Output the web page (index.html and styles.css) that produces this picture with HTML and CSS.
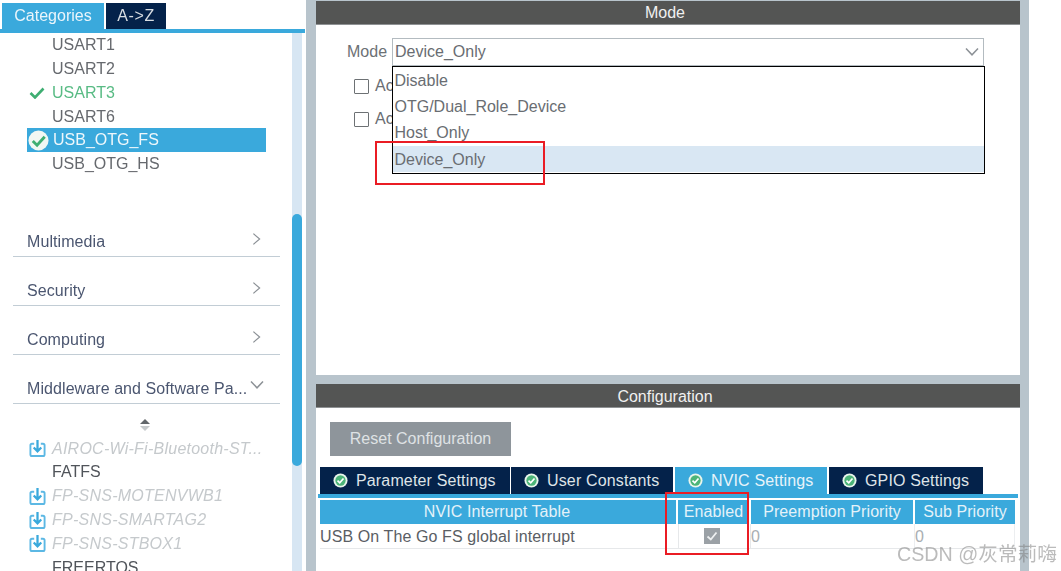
FILE: index.html
```html
<!DOCTYPE html>
<html lang="en">
<head>
<meta charset="utf-8">
<title>USB_OTG_FS Mode and Configuration</title>
<link rel="stylesheet" href="styles.css">
</head>
<body>
<svg class="defs" width="0" height="0" aria-hidden="true">
  <symbol id="dl" viewBox="0 0 18 20">
    <path d="M5.5 5.5H3.2Q1.5 5.5 1.5 7.2V16.8Q1.5 18.5 3.2 18.5H14.8Q16.500 18.500 16.500 16.800V7.200Q16.500 5.500 14.800 5.500H12.500" fill="none" stroke="#5cb8e4" stroke-width="2"/>
    <path d="M9 1.500V13M5 9.500L9 13.500L13 9.500" fill="none" stroke="#3aa9dc" stroke-width="2.400"/>
  </symbol>
  <symbol id="ok" viewBox="0 0 16 16">
    <circle cx="8" cy="8" r="7.500" fill="#e9f5ec"/>
    <circle cx="8" cy="8" r="5.500" fill="#4cb578"/>
    <path d="M4.800 8.200L7.200 10.500L11.200 5.900" fill="none" stroke="#fff" stroke-width="1.800"/>
  </symbol>
  <symbol id="chev" viewBox="0 0 10 14">
    <path d="M1.500 1L8.500 7L1.500 13" fill="none" stroke="#8c9196" stroke-width="1.300"/>
  </symbol>
  <symbol id="down" viewBox="0 0 14 10">
    <path d="M1 1.500L7 7.800L13 1.500" fill="none" stroke="#8c9196" stroke-width="1.500"/>
  </symbol>
</svg>
<div class="app">
  <aside class="side">
    <div class="side-tabs">
      <div class="side-tab side-tab-on">Categories</div>
      <div class="side-tab">A-&gt;Z</div>
    </div>
    <div class="side-rule"></div>
    <div class="side-body">
      <div class="side-list">
        <div class="item item-top"><span class="mark"></span>USART1</div>
        <div class="item item-top"><span class="mark"></span>USART2</div>
        <div class="item item-top item-green"><span class="mark"><svg class="tick" viewBox="0 0 16 12"><path d="M1.500 6L6 10.500L14.500 1.500" fill="none" stroke="#3fae72" stroke-width="2.600"/></svg></span>USART3</div>
        <div class="item item-top"><span class="mark"></span>USART6</div>
        <div class="item item-top item-on"><span class="mark"><svg class="tick-round" viewBox="0 0 22 22"><circle cx="11" cy="11" r="10.500" fill="#f1f7f3"/><path d="M5 11.500L9.500 16L17.500 7" fill="none" stroke="#3fae72" stroke-width="3"/></svg></span>USB_OTG_FS</div>
        <div class="item item-top"><span class="mark"></span>USB_OTG_HS</div>

        <div class="cats">
          <div class="cat"><span>Multimedia</span><svg class="chev"><use href="#chev"/></svg></div>
          <div class="cat"><span>Security</span><svg class="chev"><use href="#chev"/></svg></div>
          <div class="cat"><span>Computing</span><svg class="chev"><use href="#chev"/></svg></div>
          <div class="cat cat-open"><span>Middleware and Software Pa...</span><svg class="chev-down"><use href="#down"/></svg></div>
        </div>

        <div class="sort"><svg viewBox="0 0 12 14" width="12" height="14"><path d="M6 1L11 6H1Z" fill="#62676b"/><path d="M6 13L11 8H1Z" fill="#c6cacc"/></svg></div>

        <div class="item item-dim"><span class="mark"><svg class="dl"><use href="#dl"/></svg></span>AIROC-Wi-Fi-Bluetooth-ST...</div>
        <div class="item item-dark"><span class="mark"></span>FATFS</div>
        <div class="item item-dim"><span class="mark"><svg class="dl"><use href="#dl"/></svg></span>FP-SNS-MOTENVWB1</div>
        <div class="item item-dim"><span class="mark"><svg class="dl"><use href="#dl"/></svg></span>FP-SNS-SMARTAG2</div>
        <div class="item item-dim"><span class="mark"><svg class="dl"><use href="#dl"/></svg></span>FP-SNS-STBOX1</div>
        <div class="item item-dark"><span class="mark"></span>FREERTOS</div>
      </div>
      <div class="track"><div class="thumb"></div></div>
    </div>
  </aside>

  <main class="main">
    <section class="mode">
      <h2 class="bar">Mode</h2>
      <div class="mode-body">
        <div class="mode-row">
          <span class="mode-label">Mode</span>
          <div class="select">
            <span>Device_Only</span>
            <svg class="select-arrow"><use href="#down"/></svg>
          </div>
        </div>
        <div class="check-row"><span class="box"></span><span class="check-text">Ac</span></div>
        <div class="check-row"><span class="box"></span><span class="check-text">Ac</span></div>
        <div class="menu">
          <div class="opt">Disable</div>
          <div class="opt">OTG/Dual_Role_Device</div>
          <div class="opt">Host_Only</div>
          <div class="opt opt-on">Device_Only</div>
        </div>
      </div>
    </section>

    <section class="config">
      <h2 class="bar">Configuration</h2>
      <div class="reset">Reset Configuration</div>
      <div class="tabs">
        <div class="tab tab-a"><svg class="ok"><use href="#ok"/></svg>Parameter Settings</div>
        <div class="tab tab-b"><svg class="ok"><use href="#ok"/></svg>User Constants</div>
        <div class="tab tab-c tab-on"><svg class="ok"><use href="#ok"/></svg>NVIC Settings</div>
        <div class="tab tab-d"><svg class="ok"><use href="#ok"/></svg>GPIO Settings</div>
      </div>
      <div class="tabs-rule"></div>
      <div class="table">
        <div class="th th-first">NVIC Interrupt Table</div>
        <div class="th">Enabled</div>
        <div class="th">Preemption Priority</div>
        <div class="th">Sub Priority</div>
        <div class="td td-name">USB On The Go FS global interrupt</div>
        <div class="td td-check"><span class="checked"><svg viewBox="0 0 16 16" width="16" height="16"><path d="M3.500 8.500L6.800 11.500L12.500 4.500" fill="none" stroke="#eef0f1" stroke-width="1.800"/></svg></span></div>
        <div class="td td-num">0</div>
        <div class="td td-num">0</div>
      </div>
    </section>
  </main>
  <div class="margin"></div>
</div>
<div class="redbox redbox-menu"></div>
<div class="redbox redbox-enabled"></div>
<div class="watermark">CSDN @灰常莉嗨</div>
</body>
</html>
```
FILE: styles.css
```css
* { box-sizing: border-box; }
html, body {
  margin: 0;
  height: 571px;
  overflow: hidden;
  background: #fff;
}
body {
  font-family: "Liberation Sans", Arial, sans-serif;
  font-size: 16px;
  color: #5f6468;
  position: relative;
}
.defs { position: absolute; }
.app {
  display: flex;
  height: 571px;
  filter: blur(.45px);
}

/* Left panel */
.side {
  width: 306px;
  flex: none;
  display: flex;
  flex-direction: column;
  height: 571px;
  overflow: hidden;
}
.side-tabs {
  display: flex;
  gap: 2px;
  height: 26px;
  margin-top: 3px;
  padding-left: 2px;
  flex: none;
}
.side-tab {
  width: 60px;
  background: #04224a;
  color: #d8dde2;
  display: flex;
  align-items: center;
  justify-content: center;
  letter-spacing: .6px;
}
.side-tab-on {
  width: 102px;
  background: #3aa9dc;
  color: #eaf5fb;
  letter-spacing: 0;
}
.side-rule {
  height: 4px;
  flex: none;
  margin-right: 1px;
  background: #3aa9dc;
}
.side-body {
  flex: 1;
  display: flex;
  min-height: 0;
}
.side-list {
  width: 292px;
  flex: none;
}
.item {
  height: 23.8px;
  margin-left: 27px;
  width: 239px;
  display: flex;
  align-items: center;
  white-space: nowrap;
  line-height: 1;
  color: #66696e;
}
.item-top { padding-top: 1px; }
.mark {
  width: 25px;
  flex: none;
  display: flex;
  align-items: center;
  padding-left: 2px;
}
.item-green { color: #58bb84; }
.item-on {
  background: #3aa9dc;
  color: #eef7fb;
  padding-top: 0;
}
.item-on .mark { padding-left: 1px; width: 26px; }
.item-dim {
  color: #c5c9cc;
  font-style: italic;
  letter-spacing: .25px;
}
.item-dark { color: #50545a; }
.tick { width: 16px; height: 12px; }
.tick-round { width: 21px; height: 21px; flex: none; }
.dl { width: 17px; height: 20px; margin-top: -1px; flex: none; }
.cats { margin-top: 32px; }
.cat {
  height: 49px;
  margin: 0 12px 0 13px;
  padding: 0 19px 5px 14px;
  border-bottom: 1.5px solid #c2cdd5;
  display: flex;
  align-items: flex-end;
  justify-content: space-between;
  color: #4b5670;
  line-height: 18px;
  letter-spacing: .08px;
  white-space: nowrap;
}
.chev { width: 9px; height: 14px; margin-bottom: 5px; }
.cat-open { padding-right: 16px; }
.chev-down { width: 14px; height: 10px; margin-bottom: 8px; }
.sort {
  height: 33px;
  display: flex;
  align-items: center;
  justify-content: center;
  padding: 9px 2px 0 0;
  width: 291px;
}
.track {
  width: 10px;
  flex: none;
  background: #d7e6f3;
  position: relative;
}
.thumb {
  margin-top: 181px;
  height: 252px;
  background: #3aa9dc;
  border-radius: 5px;
}

/* Main column */
.main {
  width: 723px;
  flex: none;
  background: #b8c4cc;
  padding: 1px 9px 0 10px;
  display: flex;
  flex-direction: column;
  height: 571px;
}
.margin { flex: 1; background: #fff; }
.bar {
  margin: 0;
  height: 24px;
  background: #545554;
  color: #f0f0f0;
  font-size: 16px;
  font-weight: 400;
  line-height: 23px;
  text-align: center;
  border-bottom: 1px solid #8f9294;
  padding-right: 6px;
}
.mode .bar { height: 23.500px; }
.config .bar { line-height: 25px; }

/* Mode */
.mode {
  height: 374px;
  background: #fff;
  flex: none;
  display: flex;
  flex-direction: column;
}
.mode-body {
  position: relative;
  flex: 1;
  padding: 13px 0 0 31px;
}
.mode-row {
  display: flex;
  align-items: center;
  height: 28px;
  gap: 5px;
}
.mode-label { color: #6c7175; }
.select {
  width: 592px;
  height: 28px;
  border: 1.500px solid #b3bbc0;
  display: flex;
  align-items: center;
  justify-content: space-between;
  padding: 0 4px 0 2px;
  color: #696d72;
}
.select-arrow { width: 14px; height: 10px; }
.check-row {
  display: flex;
  align-items: center;
  gap: 6px;
  height: 20px;
  margin: 10.500px 0 0 7px;
  color: #696d72;
}
.check-row + .check-row { margin-top: 13px; }
.box {
  width: 15px;
  height: 15px;
  border: 1.500px solid #6d7174;
  border-radius: 1px;
}
.menu {
  position: absolute;
  left: 76px;
  top: 41.500px;
  width: 593px;
  height: 108px;
  border: 1.500px solid #000;
  background: #fff;
  color: #696d72;
}
.opt {
  height: 26.300px;
  display: flex;
  align-items: center;
  padding: 1px 0 0 1.500px;
}
.opt-on { background: #d9e7f3; }

/* Configuration */
.config {
  margin-top: 9px;
  flex: 1;
  background: #fff;
  min-height: 0;
}
.reset {
  margin: 14px 0 0 14px;
  width: 181px;
  height: 34px;
  background: #8e959b;
  color: #dfe2e4;
  display: flex;
  align-items: center;
  justify-content: center;
}
.tabs {
  display: flex;
  gap: 1px;
  margin: 11px 0 0 4px;
  height: 27px;
}
.tab {
  background: #04224a;
  color: #dfe4e8;
  display: flex;
  align-items: center;
  gap: 8px;
  padding-left: 13px;
  letter-spacing: .15px;
  white-space: nowrap;
}
.tab-a { width: 190px; }
.tab-b { width: 162px; }
.tab-c { width: 152px; margin-left: 1px; }
.tab-d { width: 154px; margin-left: 1px; }
.tab-on { background: #3aa9dc; color: #e8f4fa; }
.ok { width: 15px; height: 15px; flex: none; }
.tabs-rule {
  height: 4px;
  margin: 0 2px;
  background: #3aa9dc;
}
.table {
  display: grid;
  grid-template-columns: 356px 71px 162px 100px;
  column-gap: 2px;
  margin: 2px 0 0 4px;
  width: 695px;
}
.th {
  height: 24px;
  background: #3aa9dc;
  color: #e4f2f9;
  display: flex;
  align-items: center;
  justify-content: center;
  letter-spacing: .08px;
  white-space: nowrap;
}
.th-first { padding-right: 2px; }
.td {
  height: 25px;
  padding-top: 1px;
  display: flex;
  align-items: center;
  border-bottom: 1.500px solid #e6e8ea;
  color: #5a5e64;
  white-space: nowrap;
  margin-right: -2px;
  letter-spacing: .1px;
}
.td-check {
  justify-content: center;
  border-left: 1px solid #e6e8ea;
  border-right: 1px solid #e6e8ea;
  padding: 0 5px 0 0;
}
.td-num { color: #a9aeb2; border-right: 1px solid #eceef0; }
.td:last-child { margin-right: 0; }
.checked {
  width: 16px;
  height: 16px;
  background: #9ba1a6;
  display: block;
}
.checked svg { display: block; }

/* Annotations drawn on top of the screenshot */
.redbox {
  position: absolute;
  border: 2px solid #ea1c24;
  pointer-events: none;
}
.redbox-menu { left: 375px; top: 141px; width: 170px; height: 44px; }
.redbox-enabled { left: 665px; top: 492px; width: 84px; height: 63px; }
.watermark {
  position: absolute;
  left: 897px;
  top: 543px;
  font-family: "Liberation Sans", "Noto Sans CJK SC", sans-serif;
  font-size: 19.700px;
  line-height: 22px;
  color: rgba(120, 120, 120, .5);
  white-space: nowrap;
}
```
